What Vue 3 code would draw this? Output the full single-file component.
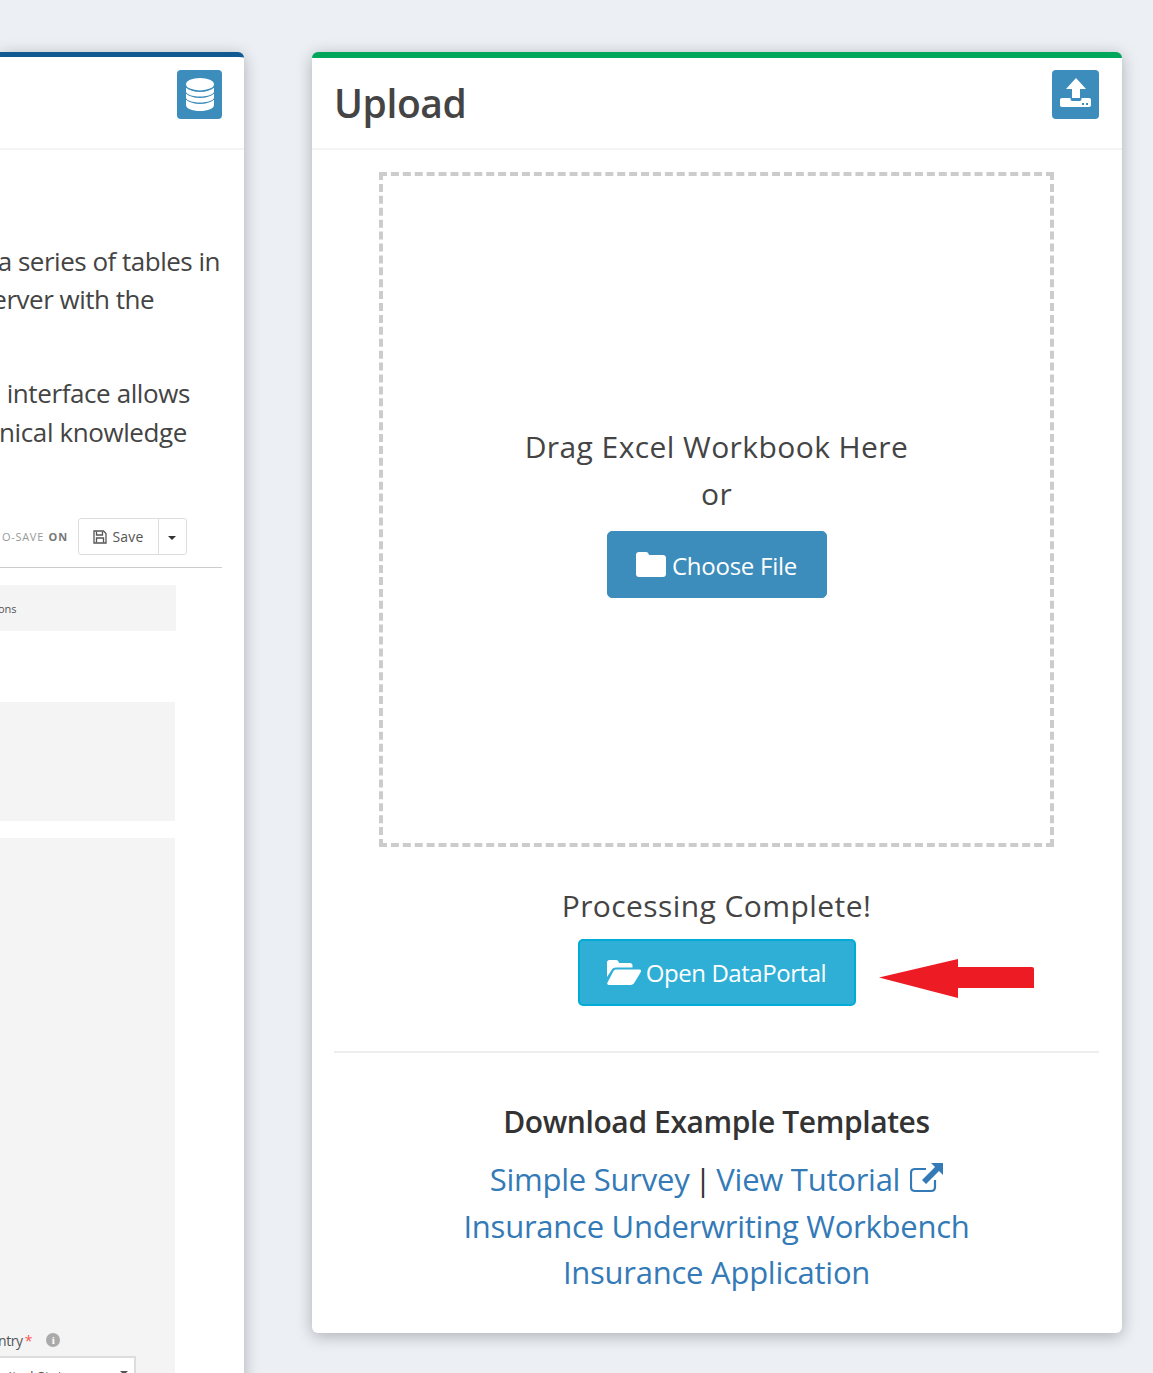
<script setup>
const links = ['Insurance Underwriting Workbench', 'Insurance Application']
</script>

<template>
  <div class="page">
    <section class="card card-left">
      <header class="head head-left">
        <span class="badge badge-db">
          <svg width="28" height="33" viewBox="0 0 28 33" fill="#fff">
            <ellipse cx="14" cy="6.200" rx="14" ry="6.200" />
            <path d="M0 9.800C3 12.500 8 14 14 14S25 12.500 28 9.800V13.500C28 16.300 22 18.500 14 18.500S0 16.300 0 13.500z" />
            <path d="M0 15.800C3 18.500 8 20 14 20S25 18.500 28 15.800V19.500C28 22.300 22 24.500 14 24.500S0 22.300 0 19.500z" />
            <path d="M0 21.800C3 24.500 8 26 14 26S25 24.500 28 21.800V27C28 30.500 22 33 14 33S0 30.500 0 27z" />
          </svg>
        </span>
      </header>
      <div class="left-body">
        <div class="para para-one">
          <p>a series of tables in</p>
          <p>erver with the</p>
        </div>
        <div class="para para-two">
          <p>interface allows</p>
          <p>nical knowledge</p>
        </div>
        <div class="shot">
          <div class="toolbar">
            <span class="autosave">O-SAVE <b>ON</b></span>
            <span class="save-group">
              <span class="save-main">
                <svg width="14" height="14" viewBox="0 0 14 14" fill="none" stroke="#555" stroke-width="1.300">
                  <path d="M1 1h9.500L13 3.500V13H1z" />
                  <path d="M3.500 1.500v3.500h6V1.500M3.500 12.500V8h7v4.500" />
                </svg>
                Save
              </span>
              <span class="save-caret"></span>
            </span>
          </div>
          <div class="tabs">ons</div>
          <div class="well well-short"></div>
          <div class="well well-tall">
            <div class="field-label">
              <span>ntry<i>*</i></span>
              <span class="info">i</span>
            </div>
            <div class="select">
              <span>nited States</span>
              <span class="select-caret"></span>
            </div>
          </div>
        </div>
      </div>
    </section>

    <section class="card card-right">
      <header class="head head-right">
        <h1>Upload</h1>
        <span class="badge badge-up">
          <svg width="47" height="49" viewBox="0 0 47 49" fill="#fff">
            <path d="M24 8 34 19H28V28H20V19H14z" />
            <path d="M10 28H18.500V29C18.500 30.500 19.500 31 21 31H27C28.500 31 29.500 30.500 29.500 29V28H37C38.500 28 39 28.800 39 30V35C39 36.300 38.300 37 37 37H10C8.700 37 8 36.300 8 35V30C8 28.800 8.700 28 10 28z" />
            <rect x="30" y="33" width="2" height="2" fill="#3c8dbc" />
            <rect x="34" y="33" width="2" height="2" fill="#3c8dbc" />
          </svg>
        </span>
      </header>
      <div class="right-body">
        <div class="drop">
          <p>Drag Excel Workbook Here</p>
          <p>or</p>
          <button class="btn btn-primary" type="button">
            <svg width="30" height="25" viewBox="0 0 30 25" fill="#fff">
              <path d="M3 0h7c1.500 0 2.500 1 3 3h14c1.700 0 3 1.200 3 3v16c0 1.800-1.300 3-3 3H3c-1.800 0-3-1.200-3-3V3c0-1.800 1.200-3 3-3z" />
            </svg>
            <span>Choose File</span>
          </button>
        </div>
        <div class="complete">
          <p>Processing Complete!</p>
          <div class="open-row">
            <button class="btn btn-info" type="button">
              <svg width="34" height="25" viewBox="0 0 34 25" fill="#fff">
                <path d="M0 2.500C0 1 1 0 2.500 0H9c1.500 0 2.500 1 3 3h11c1.500 0 2.500 1 2.500 2.500V7.500H9c-2 0-3.200.8-4.200 2.300L0 17z" />
                <path d="M9 9.500h23.500c1.300 0 2 1.200 1.300 2.400L27.500 22.500c-.9 1.600-2 2.500-4 2.500H1.800C.5 25-.2 23.800.5 22.600L6 12c.7-1.600 1.500-2.500 3-2.500z" />
              </svg>
              <span>Open DataPortal</span>
            </button>
            <svg class="arrow" width="156" height="40" viewBox="0 0 156 40">
              <path d="M0 18.500 79 0V8H153Q155 8 155 10V29H79V39z" fill="#ed1c24" />
            </svg>
          </div>
        </div>
        <div class="templates">
          <h2>Download Example Templates</h2>
          <p>
            <a>Simple Survey</a> <span class="pipe">|</span> <a>View Tutorial</a>
            <svg class="ext" width="33" height="30" viewBox="0 0 33 30" fill="none">
              <path d="M25 17v7c0 2.500-1.500 4-4 4H5c-2.500 0-4-1.500-4-4V10c0-2.500 1.500-4 4-4h11" stroke="#337ab7" stroke-width="2.200" />
              <path d="M21 0h12v12l-4-4-13 13-4-4L25 4z" fill="#337ab7" />
            </svg>
          </p>
          <p v-for="l in links" :key="l"><a>{{ l }}</a></p>
        </div>
      </div>
    </section>
  </div>
</template>

<style>
html, body { margin: 0; background: #ecf0f5; overflow: hidden; }
</style>

<style scoped>
.page {
  display: flex;
  align-items: flex-start;
  gap: 68px;
  width: 1153px;
  height: 1373px;
  padding-top: 52px;
  box-sizing: border-box;
  overflow: hidden;
  background: #ecf0f5;
  font-family: "Open Sans", "Noto Sans", sans-serif;
  color: #333;
}
p, h1, h2 { margin: 0; font-weight: 400; }
.card {
  background: #fff;
  box-shadow: 0 3px 16px rgba(0, 0, 0, .28);
  box-sizing: border-box;
}
.card-left {
  width: 244px;
  flex: none;
  height: 1400px;
  border-top: 5px solid #0f5a93;
  border-top-right-radius: 6px;
  overflow: hidden;
}
.card-right {
  width: 810px;
  flex: none;
  height: 1281px;
  border-top: 6px solid #00a65a;
  border-radius: 6px;
}
.head {
  height: 92px;
  border-bottom: 2px solid #f4f4f4;
  box-sizing: border-box;
  display: flex;
  position: relative;
}
.head-left { height: 93px; justify-content: flex-end; padding: 13px 22px 0 0; }
.head-right { justify-content: space-between; padding: 12px 23px 0 22px; }
h1 { font-size: 39px; line-height: 65px; font-weight: 600; color: #444; letter-spacing: -.4px; }
.badge {
  display: flex;
  align-items: center;
  justify-content: center;
  background: #3c8dbc;
  border-radius: 4px;
}
.badge-db { width: 45px; height: 49px; }
.badge-up { width: 47px; height: 49px; }

.left-body { padding-right: 22px; }
.para {
  font-size: 26px;
  color: #444;
  white-space: nowrap;
  letter-spacing: -.5px;
}
.para p { display: flex; justify-content: flex-end; }
.para-one { margin-top: 92px; line-height: 38px; padding-right: 2px; }
.para-one p:nth-child(2) { padding-right: 66px; }
.para-two { margin-top: 56px; line-height: 38.500px; padding-right: 32px; letter-spacing: -.4px; }
.para-two p:nth-child(2) { padding-right: 3px; }
.shot { margin-top: 67px; }
.toolbar {
  height: 49px;
  border-bottom: 1px solid #ccc;
  display: flex;
  justify-content: flex-end;
  align-items: flex-start;
  gap: 10px;
  padding-right: 35px;
}
.autosave {
  font-size: 11px;
  line-height: 38px;
  color: #999;
  white-space: nowrap;
  letter-spacing: .7px;
}
.autosave b { color: #777; letter-spacing: .9px; margin-left: 1px; }
.save-group {
  display: flex;
  height: 37px;
  width: 109px;
  box-sizing: border-box;
  border: 1px solid #ddd;
  border-radius: 3px;
}
.save-main {
  width: 79px;
  border-right: 1px solid #ddd;
  display: flex;
  align-items: center;
  justify-content: center;
  gap: 5px;
  font-size: 14px;
  letter-spacing: .2px;
  color: #555;
}
.save-caret {
  margin: 17px 0 0 9px;
  width: 0;
  height: 0;
  border: 4px solid transparent;
  border-top-color: #333;
}
.tabs {
  margin: 17px 46px 0 -2px;
  height: 46px;
  background: #f4f4f4;
  font-size: 11px;
  line-height: 47px;
  color: #555;
}
.well { background: #f4f4f4; margin-right: 47px; }
.well-short { margin-top: 71px; height: 119px; }
.well-tall {
  margin-top: 17px;
  height: 560px;
  padding-top: 491px;
  box-sizing: border-box;
  overflow: hidden;
}
.field-label {
  display: flex;
  align-items: center;
  gap: 14px;
  height: 22px;
  font-size: 14px;
  letter-spacing: -.4px;
  color: #555;
  margin-left: -2px;
}
.field-label i { color: #f55; font-style: normal; margin-left: 2px; }
.info {
  width: 14px;
  height: 14px;
  border-radius: 50%;
  background: #aaa;
  color: #fff;
  font: 700 11px/14px "Liberation Serif", serif;
  text-align: center;
}
.select {
  margin: 5px 39px 0 0;
  height: 30px;
  background: #fff;
  border: 2px solid #ddd;
  border-left: 0;
  box-sizing: border-box;
  display: flex;
  justify-content: space-between;
  padding: 8px 6px 0 0;
  font-size: 14px;
  line-height: 22px;
  color: #555;
  white-space: nowrap;
}
.select-caret {
  margin-top: 5px;
  width: 0;
  height: 0;
  border: 4px solid transparent;
  border-top-color: #555;
}

.right-body { padding: 22px 23px 0 22px; }
.drop {
  margin: 0 45px 0 45px;
  width: 675px;
  height: 675px;
  box-sizing: border-box;
  border: 4px dashed #ccc;
  display: flex;
  flex-direction: column;
  align-items: center;
  justify-content: center;
  font-size: 30px;
  letter-spacing: .42px;
  line-height: 46.500px;
  color: #444;
  padding-top: 3px;
}
.btn {
  display: inline-flex;
  align-items: center;
  justify-content: center;
  color: #fff;
  font-family: inherit;
  font-size: 24px;
  border-radius: 5px;
  box-sizing: border-box;
  cursor: pointer;
}
.btn-primary {
  margin-top: 14px;
  width: 220px;
  height: 67px;
  gap: 6px;
  letter-spacing: -.25px;
  background: #3c8dbc;
  border: 1px solid #3c8dbc;
}
.btn-primary span { padding-top: 2px; }
.btn-info {
  width: 278px;
  height: 67px;
  gap: 5px;
  letter-spacing: -.45px;
  background: #2fafd6;
  border: 2px solid #00acd6;
}
.complete {
  margin-top: 36px;
  text-align: center;
  font-size: 30px;
  letter-spacing: .42px;
  line-height: 46px;
  color: #444;
  padding-bottom: 45px;
  border-bottom: 2px solid #eee;
}
.open-row {
  margin-top: 10px;
  display: flex;
  justify-content: center;
  position: relative;
}
.arrow { position: absolute; left: 545px; top: 20px; }
.templates {
  padding-top: 46px;
  text-align: center;
  font-size: 31px;
  letter-spacing: -.25px;
  line-height: 46.500px;
  color: #333;
}
.templates h2 {
  font-size: 30px;
  line-height: 46px;
  font-weight: 600;
  letter-spacing: -.4px;
  margin-bottom: 11px;
}
.templates a { color: #337ab7; }
.pipe { margin: 0 -2.750px; }
.ext { vertical-align: -2px; margin-left: 10px; }
</style>
